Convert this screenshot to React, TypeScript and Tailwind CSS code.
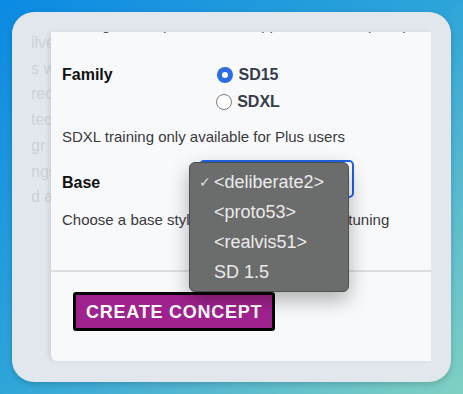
import React from "react";

const font = { fontFamily: '"Liberation Sans", Arial, sans-serif' };

export default function App() {
  const faint = ["ilve", "s w", "rec", "tec", "gr", "ngs", "d a"];
  return (
    <div
      className="w-[463px] h-[394px] overflow-hidden bg-linear-to-br from-[#0a8ae3] via-[#2ea5d9] to-[#7fd0c2] p-[12px]"
      style={font}
    >
      <div className="w-[439px] h-[370px] rounded-[22px] bg-[#e2e6ed] shadow-[0_2px_6px_rgba(0,0,0,0.18)] flex pt-[20px] pl-[20px] pr-[20px] pb-[21px]">
        <div className="w-[19px] overflow-hidden flex flex-col mt-[-2px] text-[16px] leading-[25.7px] text-[#cdd1d8] whitespace-nowrap">
          {faint.map((t) => (
            <div key={t} className="ml-[-1px]">{t}</div>
          ))}
        </div>
        <div className="relative w-[380px] h-[329px] bg-[#f8f9fb] rounded-bl-[6px] shadow-[-3px_0_4px_rgba(0,0,0,0.07)] overflow-hidden">
          <div className="flex flex-col">
            <div className="mt-[-18px] pl-[11px] h-[22px] leading-[22px] text-[15px] text-[#4a4a4a] whitespace-nowrap">
              catalog item captions will be appended to this prompt.
            </div>

            <div className="mt-[25.5px] flex items-start pl-[11px]">
              <div className="w-[137px] h-[27px] flex items-center text-[16px] font-bold text-[#111]">
                Family
              </div>
              <div className="w-[98px] flex flex-col items-center">
                <div className="h-[27px] flex items-center gap-[5px]">
                  <span className="w-[16px] h-[16px] rounded-full bg-[#2c6be4] flex items-center justify-center">
                    <span className="w-[6px] h-[6px] rounded-full bg-white" />
                  </span>
                  <span className="text-[16px] font-bold text-[#363c48]">SD15</span>
                </div>
                <div className="h-[27px] flex items-center gap-[5px]">
                  <span className="w-[16px] h-[16px] rounded-full bg-white border border-[#7d7d7d]" />
                  <span className="text-[16px] font-bold text-[#363c48]">SDXL</span>
                </div>
              </div>
            </div>

            <div className="mt-[10.5px] pl-[11px] h-[22px] leading-[22px] text-[15px] text-[#3a3a3a] whitespace-nowrap">
              SDXL training only available for Plus users
            </div>

            <div className="mt-[12px] flex items-start pl-[11px]">
              <div className="w-[137px] pt-[12px] h-[34px] leading-[22px] text-[16px] font-bold text-[#111]">
                Base
              </div>
              <div className="relative w-[155px] h-[38px] rounded-[5px] border-2 border-[#1f62e6] bg-white flex items-center px-[10px] text-[15px] text-[#333]">
                &lt;deliberate2&gt;
                <div className="absolute left-[-12px] top-[0px] w-[160px] h-[130px] rounded-[6px] bg-[#6b6c6c] border border-[#4e4f4f] shadow-[0_8px_20px_rgba(0,0,0,0.3)] py-[4px] z-10">
                  {["<deliberate2>", "<proto53>", "<realvis51>", "SD 1.5"].map((t, i) => (
                    <div key={t} className="h-[30px] flex items-center text-[18px] text-[#ebebeb] whitespace-nowrap">
                      <span className="w-[24px] pl-[9px] text-[14px] text-[#dedede]">{i === 0 ? "✓" : ""}</span>
                      <span>{t}</span>
                    </div>
                  ))}
                </div>
              </div>
            </div>

            <div className="mt-[11px] pl-[11px] h-[22px] leading-[22px] text-[15px] text-[#3a3a3a] whitespace-nowrap">
              Choose a base style for your concept's finetuning
            </div>

            <div className="mt-[39px] h-[2px] bg-[#dcdee4]" />

            <div className="mt-[20px] pl-[22px]">
              <button className="h-[39px] px-[10px] bg-[#a0228f] border-[3px] border-black rounded-[3px] text-white text-[18px] font-bold uppercase tracking-[0.75px] leading-none">
                Create Concept
              </button>
            </div>
          </div>
        </div>
      </div>
    </div>
  );
}
